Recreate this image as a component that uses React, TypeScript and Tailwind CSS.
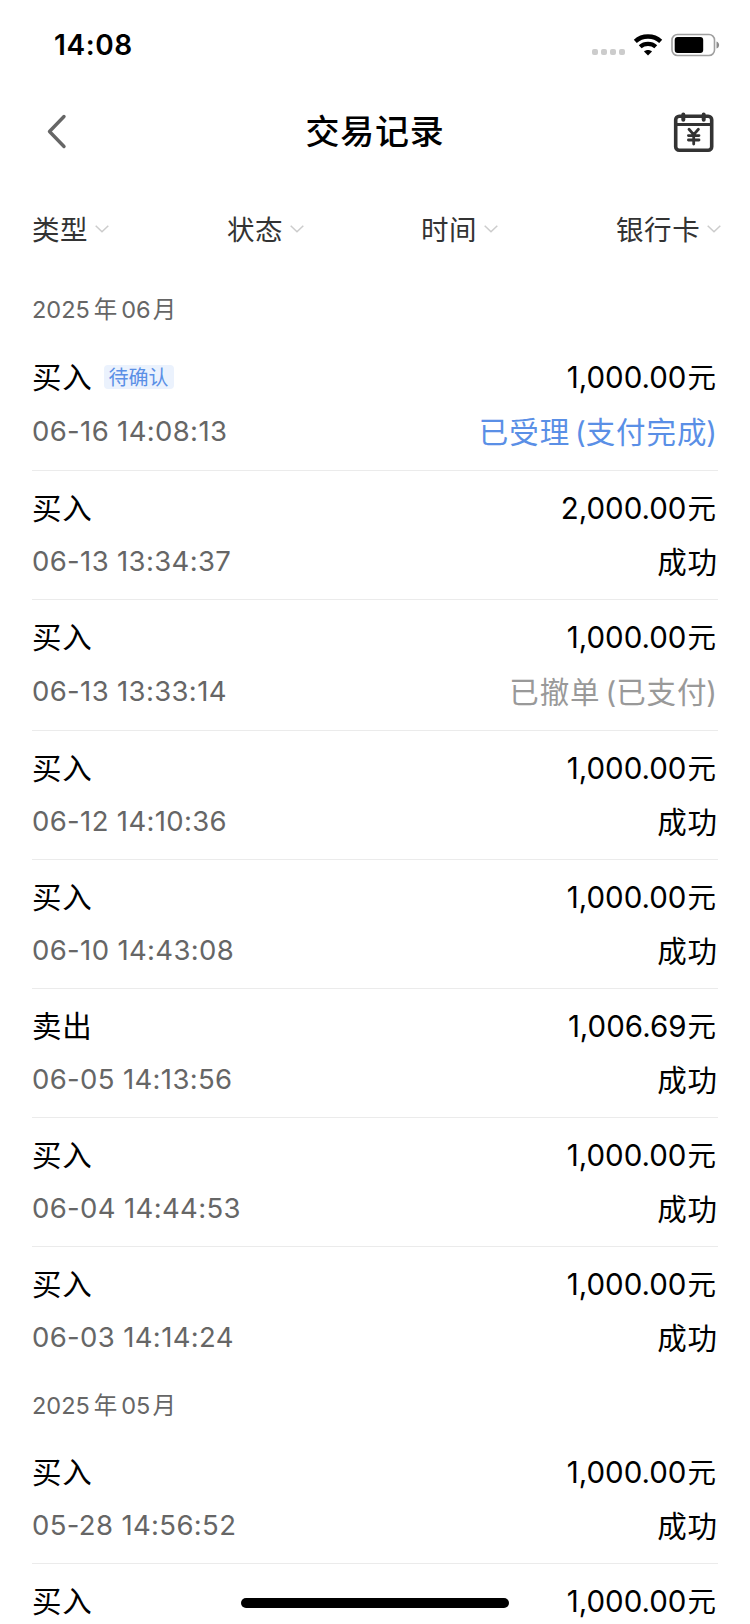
import clsx from "clsx";

type TradeRecord = {
    type: string;
    time: string;
    amount: string;
    status: string;
    note?: string;
    badge?: string;
    statusColor?: string;
}

type MonthGroup = {
    year: string;
    month: string;
    records: TradeRecord[];
}

const filters = ["类型", "状态", "时间", "银行卡"];

const groups: MonthGroup[] = [
    {
        year: "2025",
        month: "06",
        records: [
            {
                type: "买入",
                time: "06-16 14:08:13",
                amount: "1,000.00",
                status: "已受理",
                note: "支付完成",
                badge: "待确认",
                statusColor: "text-[#5a8fe6]"
            },
            {type: "买入", time: "06-13 13:34:37", amount: "2,000.00", status: "成功"},
            {
                type: "买入",
                time: "06-13 13:33:14",
                amount: "1,000.00",
                status: "已撤单",
                note: "已支付",
                statusColor: "text-[#999999]"
            },
            {type: "买入", time: "06-12 14:10:36", amount: "1,000.00", status: "成功"},
            {type: "买入", time: "06-10 14:43:08", amount: "1,000.00", status: "成功"},
            {type: "卖出", time: "06-05 14:13:56", amount: "1,006.69", status: "成功"},
            {type: "买入", time: "06-04 14:44:53", amount: "1,000.00", status: "成功"},
            {type: "买入", time: "06-03 14:14:24", amount: "1,000.00", status: "成功"},
        ]
    },
    {
        year: "2025",
        month: "05",
        records: [
            {type: "买入", time: "05-28 14:56:52", amount: "1,000.00", status: "成功"},
            {type: "买入", time: "", amount: "1,000.00", status: ""},
        ]
    },
];

function StatusBar() {
    return (
        <div className="flex h-[88px] items-center justify-between pl-[54px] pr-[30px]">
            <span className="mt-[2px] text-[28px] font-semibold leading-none tracking-[0.6px]">14:08</span>
            <div className="flex items-center">
                <div className="mt-[16px] flex gap-[3px]">
                    {[0, 1, 2, 3].map((dot) => (
                        <span key={dot} className="h-[6px] w-[6px] rounded-[2px] bg-[#cccccc]"/>
                    ))}
                </div>
                <svg className="ml-[8px] mt-[1px]" width="30" height="22" viewBox="0 0 30 22" fill="none">
                    <path d="M2.3 7.4C9.3 0.9 20.7 0.9 27.7 7.4" stroke="black" strokeWidth="4.4"/>
                    <path d="M7.2 12.8C11.5 8.9 18.5 8.9 22.8 12.8" stroke="black" strokeWidth="4.2"/>
                    <path d="M11 17.6C13.2 15.6 16.8 15.6 19 17.6L15 21.5Z" fill="black"/>
                </svg>
                <svg className="ml-[8px] mt-[1px]" width="49" height="24" viewBox="0 0 49 24" fill="none">
                    <rect x="1" y="1.5" width="42.5" height="21" rx="5.5" stroke="#a0a0a0" strokeWidth="1.6"/>
                    <rect x="3.7" y="4" width="28.5" height="16" rx="3" fill="black"/>
                    <path d="M45.5 8.5C49 9.5 49 14.5 45.5 15.5Z" fill="#8c8c8c"/>
                </svg>
            </div>
        </div>
    )
}

function NavBar() {
    return (
        <div className="grid h-[88px] grid-cols-[1fr_auto_1fr] items-center pl-[46px] pr-[35px]">
            <svg width="42" height="36" viewBox="0 0 42 36" fill="none" stroke="#666666" strokeWidth="3.4"
                 strokeLinecap="round" strokeLinejoin="round">
                <path d="M18 2.5L3.5 17.5L18 32.5"/>
            </svg>
            <h1 className="-ml-[11px] text-[34px] font-medium leading-none tracking-[0.8px]">交易记录</h1>
            <svg className="justify-self-end" width="42" height="42" viewBox="0 0 42 42" fill="none" stroke="#333333"
                 strokeWidth="3.6" strokeLinecap="round" strokeLinejoin="round">
                <rect x="2.7" y="5.2" width="36" height="34" rx="3.5"/>
                <path d="M2.7 13.5H38.7" strokeWidth="3" strokeLinecap="butt"/>
                <path d="M10.3 3.6V8.8M30.7 3.6V8.8" strokeWidth="4"/>
                <path d="M16 18.3L20.7 23.6L25.4 18.3M20.7 24V33M15.4 24.6H26M15.4 29H26" strokeWidth="2.8"/>
            </svg>
        </div>
    )
}

function FilterBar() {
    return (
        <div className="grid h-[104px] grid-cols-[195px_194px_195px_auto] items-center pl-[32px] text-[#333333]">
            {filters.map((name) => (
                <div key={name} className="flex items-center">
                    <span className="mt-[4px] text-[27.5px] leading-[40px] tracking-[0.6px]">{name}</span>
                    <svg className="ml-[7px] mt-[1px]" width="14" height="8" viewBox="0 0 14 8" fill="none"
                         stroke="#cccccc" strokeWidth="1.5">
                        <path d="M0.7 0.8L7 6.8L13.3 0.8"/>
                    </svg>
                </div>
            ))}
        </div>
    )
}

function RecordRow({record, last}: { record: TradeRecord, last: boolean }) {
    return (
        <li className={clsx("border-b pb-[17px] pt-[17px]", last ? "border-transparent" : "border-[#ebebeb]")}>
            <div className="flex h-[40px] items-center justify-between">
                <div className="flex items-center">
                    <span className="text-[29.5px] leading-[40px] tracking-[0.8px]">{record.type}</span>
                    {record.badge && (
                        <span className="ml-[11px] flex h-[24px] w-[70px] items-center justify-center rounded-[4px] bg-[#ebf2fd] pt-[1px] text-[20px] leading-none text-[#5a8fe6]">
                            {record.badge}
                        </span>
                    )}
                </div>
                <span className="pr-[2px] text-[29.5px] leading-[40px]">
                    {record.amount}<span className="ml-[1px] text-[28.5px]">元</span>
                </span>
            </div>
            <div className={clsx("mt-[14px] flex items-center justify-between", record.note ? "h-[42px]" : "h-[40px]")}>
                <span className="-mt-[2px] text-[27.5px] leading-[40px] tracking-[0.35px] text-[#666666]">{record.time}</span>
                <span className={clsx("-mt-[1px] text-[29.5px] leading-[40px] tracking-[0.9px]", record.statusColor)}>
                    {record.status}
                    {record.note && <span className="ml-[5px]"><span className="-mr-[1px]">(</span>{record.note}<span className="-ml-[1px]">)</span></span>}
                </span>
            </div>
        </li>
    )
}

export default function App() {
    return (
        <div className="relative h-[1624px] w-[750px] overflow-hidden bg-white font-['Inter','Noto_Sans_CJK_SC',sans-serif] text-black">
            <StatusBar/>
            <NavBar/>
            <FilterBar/>
            {groups.map((group, i) => (
                <section key={group.month} className="pl-[32px] pr-[32px]">
                    <h2 className={clsx("flex items-center text-[23.5px] leading-none text-[#666666]", i === 0 ? "h-[60px]" : "h-[59px]")}>
                        <span>{group.year}</span>
                        <span className="ml-[4px]">年</span>
                        <span className="ml-[4px]">{group.month}</span>
                        <span className="ml-[2px]">月</span>
                    </h2>
                    <ul>
                        {group.records.map((record, i) => (
                            <RecordRow key={i} record={record} last={i === group.records.length - 1}/>
                        ))}
                    </ul>
                </section>
            ))}
            {/* home indicator */}
            <div className="absolute bottom-[16px] left-[241px] h-[10px] w-[268px] rounded-full bg-black"/>
        </div>
    )
}
